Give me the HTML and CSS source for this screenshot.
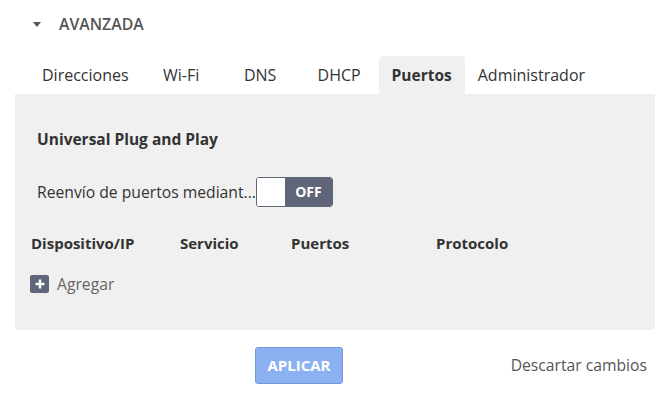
FILE: index.html
```html
<!DOCTYPE html>
<html lang="es">
<head>
    <meta charset="UTF-8">
    <meta name="viewport" content="width=device-width, initial-scale=1.0">
    <title>Avanzada - Puertos</title>
    <link rel="stylesheet" href="styles.css">
</head>
<body>

    <div class="container">
        <div class="section-title">
            <span class="caret"></span>
            <span>AVANZADA</span>
        </div>

        <div class="tabs">
            <div class="tab">Direcciones</div>
            <div class="tab">Wi-Fi</div>
            <div class="tab">DNS</div>
            <div class="tab">DHCP</div>
            <div class="tab active">Puertos</div>
            <div class="tab">Administrador</div>
        </div>

        <div class="panel">
            <h2>Universal Plug and Play</h2>

            <div class="setting">
                <span class="setting-label">Reenvío de puertos mediant...</span>
                <div class="toggle">
                    <span class="toggle-knob"></span>
                    <span class="toggle-state">OFF</span>
                </div>
            </div>

            <div class="ports-table">
                <div class="col-ip">Dispositivo/IP</div>
                <div class="col-service">Servicio</div>
                <div class="col-ports">Puertos</div>
                <div class="col-proto">Protocolo</div>
            </div>

            <div class="add-row">
                <span class="add-icon">
                    <svg width="12" height="12" viewBox="0 0 12 12">
                        <path d="M6 1.5v9M1.5 6h9" stroke="#fff" stroke-width="2.4" fill="none"/>
                    </svg>
                </span>
                <span>Agregar</span>
            </div>
        </div>

        <div class="actions">
            <button class="btn-apply">APLICAR</button>
            <span class="discard">Descartar cambios</span>
        </div>
    </div>

</body>
</html>
```

FILE: styles.css
```css
body {
    font-family: 'Open Sans', 'Liberation Sans', sans-serif;
    background-color: #fff;
    color: #333;
    margin: 0;
    padding: 0;
}
.container {
    width: 640px;
    padding: 0 11px 0 15px;
}
.section-title {
    display: flex;
    align-items: center;
    height: 48px;
    padding-left: 18px;
    font-size: 15.8px;
    font-weight: 600;
    color: #555;
}
.caret {
    width: 0;
    height: 0;
    border-left: 4.5px solid transparent;
    border-right: 4.5px solid transparent;
    border-top: 5px solid #555;
    margin-right: 18px;
}
.tabs {
    display: flex;
    padding-left: 14px;
    margin-top: 8px;
}
.tab {
    min-width: 53px;
    padding: 0 13px;
    height: 38px;
    line-height: 38px;
    text-align: center;
    font-size: 16px;
    color: #333;
    border-radius: 4px 4px 0 0;
}
.tab.active {
    background-color: #f0f0f0;
    font-weight: 700;
    font-size: 15.5px;
}
.panel {
    background-color: #f0f0f0;
    border-radius: 0 0 4px 4px;
    height: 236px;
    padding: 0 16px;
    box-sizing: border-box;
}
.panel h2 {
    margin: 0;
    padding: 34px 0 0 6px;
    font-size: 15.5px;
    font-weight: 700;
    line-height: 22px;
}
.setting {
    display: flex;
    align-items: center;
    margin-top: 27px;
    padding-left: 6px;
    font-size: 15.7px;
}
.toggle {
    display: flex;
    width: 77px;
    height: 30px;
    border: 1px solid #5f6679;
    border-radius: 3px;
    box-sizing: border-box;
    overflow: hidden;
}
.toggle-knob {
    width: 28px;
    background-color: #fff;
}
.toggle-state {
    flex: 1;
    background-color: #5f6679;
    color: #fff;
    font-size: 14px;
    font-weight: 700;
    text-align: center;
    line-height: 28px;
}
.ports-table {
    display: grid;
    grid-template-columns: 149px 111px 145px auto;
    margin-top: 25px;
    font-size: 15px;
    font-weight: 700;
    line-height: 22px;
}
.add-row {
    display: flex;
    align-items: center;
    margin-top: 19px;
    font-size: 15.7px;
    color: #666;
}
.add-icon {
    display: flex;
    align-items: center;
    justify-content: center;
    width: 19px;
    height: 18px;
    background-color: #5f6679;
    border-radius: 2px;
    margin-right: 8px;
    margin-left: -1px;
}
.actions {
    display: flex;
    align-items: center;
    height: 70px;
}
.btn-apply {
    margin-left: 240px;
    width: 88px;
    height: 37px;
    background-color: #8bb1f2;
    border: 1px solid #7398d8;
    border-radius: 3px;
    color: #fff;
    font-family: inherit;
    font-size: 15px;
    font-weight: 700;
}
.discard {
    margin-left: auto;
    margin-right: 8px;
    font-size: 15.7px;
    color: #555;
}
```
